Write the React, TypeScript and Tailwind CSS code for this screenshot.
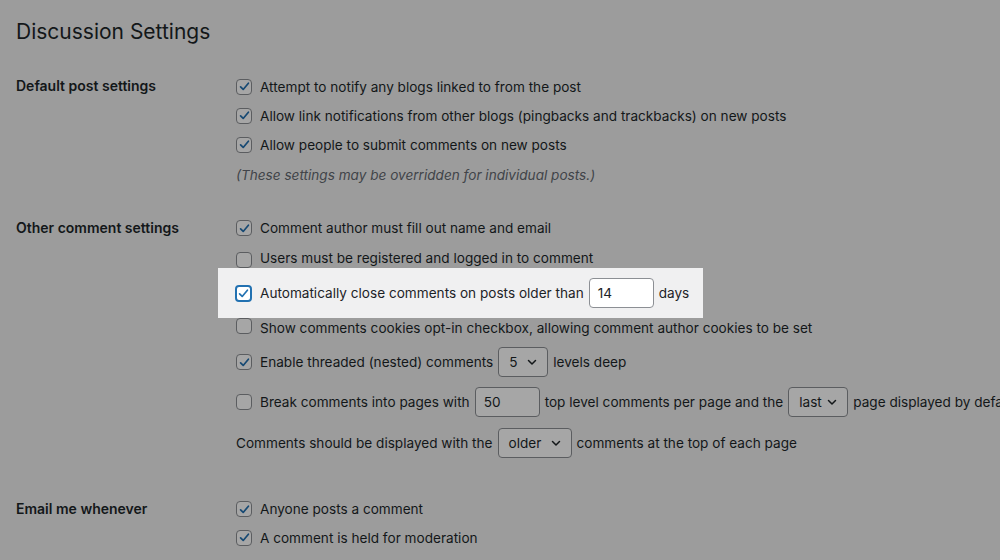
import React from "react";

const font = { fontFamily: "Inter, 'Noto Sans', Arial, sans-serif" };

function Check({ checked, focus }: { checked?: boolean; focus?: boolean }) {
  if (focus) {
    return (
      <span className="inline-flex items-center justify-center w-[17px] h-[17px] rounded-[4px] border-2 border-[#2271b1] bg-white shrink-0">
        <svg width="13" height="13" viewBox="0 0 20 20">
          <path d="M4 10.5 L8 14.5 L16 5" fill="none" stroke="#2271b1" strokeWidth="2.6" strokeLinecap="round" strokeLinejoin="round" />
        </svg>
      </span>
    );
  }
  return (
    <span className="inline-flex items-center justify-center w-[16px] h-[16px] rounded-[4px] border border-[#5b5d60] bg-[#a6a6a6] shrink-0">
      {checked && (
        <svg width="13" height="13" viewBox="0 0 20 20">
          <path d="M4 10.5 L8 14.5 L16 5" fill="none" stroke="#164973" strokeWidth="2.6" strokeLinecap="round" strokeLinejoin="round" />
        </svg>
      )}
    </span>
  );
}

function Chevron() {
  return (
    <svg width="12" height="12" viewBox="0 0 12 12">
      <path d="M2.5 4.5 L6 8 L9.5 4.5" fill="none" stroke="#131719" strokeWidth="1.5" strokeLinecap="round" strokeLinejoin="round" />
    </svg>
  );
}

function Select({ value, w }: { value: string; w: string }) {
  return (
    <span className={`inline-flex items-center justify-between h-[30px] ${w} mx-[5px] pl-[10px] pr-[9px] rounded-[4px] border border-[#5b5d60] bg-[#a6a6a6]`}>
      <span>{value}</span>
      <Chevron />
    </span>
  );
}

function Input({ value, light }: { value: string; light?: boolean }) {
  return (
    <span
      className={`inline-flex items-center h-[30px] w-[65px] mx-[5px] px-[8px] rounded-[4px] border ${
        light ? "border-[#8c8f94] bg-white text-[#1d2327]" : "border-[#5b5d60] bg-[#a6a6a6]"
      }`}
    >
      {value}
    </span>
  );
}

function Row({ h, checked, box = true, align = "items-center", children }: { h: string; checked?: boolean; box?: boolean; align?: string; children: React.ReactNode }) {
  return (
    <div className={`flex ${align} ${h} whitespace-nowrap`}>
      {box && (
        <span className="mr-[8px] flex">
          <Check checked={checked} />
        </span>
      )}
      <span className="flex items-center">{children}</span>
    </div>
  );
}

function Section({ label, children, className = "" }: { label: string; children: React.ReactNode; className?: string }) {
  return (
    <div className={`flex ${className}`}>
      <div className="w-[236px] shrink-0 pl-4 h-[28px] flex items-center font-semibold text-[14px]">{label}</div>
      <div className="flex flex-col flex-1 min-w-0">{children}</div>
    </div>
  );
}

export default function App() {
  return (
    <div className="w-[1000px] h-[560px] overflow-hidden bg-[#9c9c9c] text-[#131719] text-[13.6px] leading-5" style={font}>
      <div className="h-[64px] flex items-center pl-4 text-[21px] font-normal text-[#131719]">Discussion Settings</div>

      <Section label="Default post settings" className="mt-[8px]">
        <Row h="h-[29px]" checked>Attempt to notify any blogs linked to from the post</Row>
        <Row h="h-[29px]" checked>Allow link notifications from other blogs (pingbacks and trackbacks) on new posts</Row>
        <Row h="h-[29px]" checked>Allow people to submit comments on new posts</Row>
        <Row h="h-[31px]" box={false}>
          <span className="italic text-[#414449]">(These settings may be overridden for individual posts.)</span>
        </Row>
      </Section>

      <Section label="Other comment settings" className="mt-[24px]">
        <Row h="h-[28px]" checked>Comment author must fill out name and email</Row>
        <Row h="h-[26px]" align="items-end">Users must be registered and logged in to comment</Row>
        <div className="-ml-[18px] pl-[17px] w-[485px] h-[50px] bg-[#f0f0f1] text-[#1d2327] flex items-center whitespace-nowrap">
          <span className="mr-[8px] flex">
            <Check checked focus />
          </span>
          Automatically close comments on posts older than
          <Input value="14" light />
          days
        </div>
        <Row h="h-[29px]" align="items-start">Show comments cookies opt-in checkbox, allowing comment author cookies to be set</Row>
        <Row h="h-[30px]" checked>
          Enable threaded (nested) comments
          <Select value="5" w="w-[50px]" />
          levels deep
        </Row>
        <div className="mt-[10px]">
          <Row h="h-[30px]">
            Break comments into pages with
            <Input value="50" />
            top level comments per page and the
            <Select value="last" w="w-[60px]" />
            page displayed by default
          </Row>
        </div>
        <div className="mt-[11px]">
          <Row h="h-[30px]" box={false}>
            Comments should be displayed with the
            <Select value="older" w="w-[74px]" />
            comments at the top of each page
          </Row>
        </div>
      </Section>

      <Section label="Email me whenever" className="mt-[37px]">
        <Row h="h-[28px]" checked>Anyone posts a comment</Row>
        <Row h="h-[29px]" checked>A comment is held for moderation</Row>
      </Section>
    </div>
  );
}
